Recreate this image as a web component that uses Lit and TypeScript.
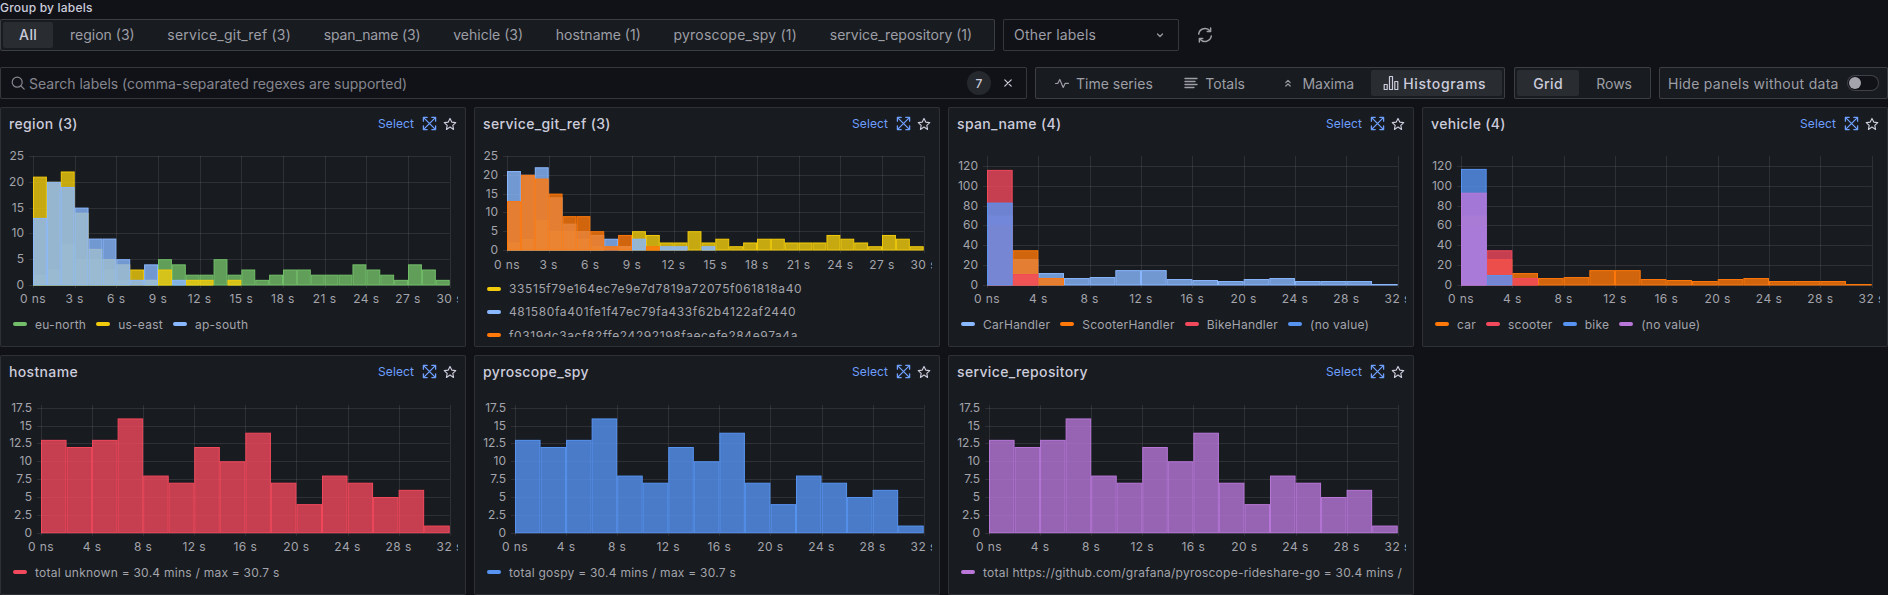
import { LitElement, html, css, svg } from "lit";
import { customElement } from "lit/decorators.js";

const GREEN = "#73BF69", YELLOW = "#F2CC0C", LBLUE = "#8AB8FF", ORANGE = "#FF780A", RED = "#F2495C", BLUE = "#5794F2", PURPLE = "#B877D9";
const A = [2,3,8,5,5,3,1,0,1,5,4,2,2,5,2,3,1,2,3,3,2,2,2,4,3,2,1,4,3,1];
const B = [21,20,22,14,7,5,4,3,1,3,0,1,1,0,1];
const C = [13,20,19,15,9,9,5,1,4,0,1];
const CAR = [70,26,12,7,8,15,15,6,5,4,6,7,4,4,4,1];
const TOTAL = [13,12,13,16,8,7,12,10,14,7,4,8,7,5,6,1];

interface Series { name: string; color: string; data: number[] }
interface Panel {
  title: string; series: Series[]; x0: number; yTop: number; base: number; svgH: number; xLabelOff: number;
  yMax: number; yStep: number; xMax: number; xStep: number; binW: number; list?: boolean;
}

const wide = { x0: 30, yMax: 130, yStep: 20, xMax: 32, xStep: 4, binW: 2, yTop: 9, base: 138, svgH: 165, xLabelOff: 18 };
const low = { x0: 32, yMax: 17.88, yStep: 2.5, xMax: 32, xStep: 4, binW: 2, yTop: 10, base: 137.7, svgH: 165, xLabelOff: 18 };
const thirty = { x0: 24, yMax: 25, yStep: 5, xMax: 30, xStep: 3, binW: 1, yTop: 9, base: 138, svgH: 165, xLabelOff: 18 };

const PANELS: Panel[] = [
  { title: "region (3)", ...thirty, series: [
    { name: "eu-north", color: GREEN, data: A }, { name: "us-east", color: YELLOW, data: B }, { name: "ap-south", color: LBLUE, data: C } ] },
  { title: "service_git_ref (3)", ...thirty, base: 103, svgH: 130, xLabelOff: 19, list: true, series: [
    { name: "33515f79e164ec7e9e7d7819a72075f061818a40", color: YELLOW, data: A },
    { name: "481580fa401fe1f47ec79fa433f62b4122af2440", color: LBLUE, data: B },
    { name: "f0319dc3acf82ffe24292198faecefe284e97a4a", color: ORANGE, data: C } ] },
  { title: "span_name (4)", ...wide, series: [
    { name: "CarHandler", color: LBLUE, data: CAR }, { name: "ScooterHandler", color: ORANGE, data: [60,35,7] },
    { name: "BikeHandler", color: RED, data: [116,11] }, { name: "(no value)", color: BLUE, data: [83] } ] },
  { title: "vehicle (4)", ...wide, series: [
    { name: "car", color: ORANGE, data: CAR }, { name: "scooter", color: RED, data: [60,35,7] },
    { name: "bike", color: BLUE, data: [117,10] }, { name: "(no value)", color: PURPLE, data: [93] } ] },
  { title: "hostname", ...low, series: [{ name: "total unknown = 30.4 mins / max = 30.7 s", color: RED, data: TOTAL }] },
  { title: "pyroscope_spy", ...low, series: [{ name: "total gospy = 30.4 mins / max = 30.7 s", color: BLUE, data: TOTAL }] },
  { title: "service_repository", ...low, series: [{ name: "total https://github.com/grafana/pyroscope-rideshare-go = 30.4 mins / max = 30.7 s", color: PURPLE, data: TOTAL }] },
];

const X1 = 440.7;

function chart(p: Panel) {
  const sx = (v: number) => p.x0 + (v / p.xMax) * (X1 - p.x0);
  const sy = (v: number) => p.base - (v / p.yMax) * (p.base - p.yTop);
  const yTicks: number[] = [];
  for (let v = 0; v <= p.yMax + 1e-6; v += p.yStep) yTicks.push(v);
  const xTicks: number[] = [];
  for (let v = 0; v <= p.xMax; v += p.xStep) xTicks.push(v);
  const xLabelY = p.base + p.xLabelOff;
  return html`<svg class="chart" width="449" height=${p.svgH} viewBox="0 0 449 ${p.svgH}">
    ${yTicks.map((v) => svg`
      <line class="grid" x1=${p.x0 - 4} x2=${X1} y1=${Math.round(sy(v)) + 0.5} y2=${Math.round(sy(v)) + 0.5}></line>
      <text class="tick" text-anchor="end" x=${p.x0 - 9} y=${sy(v) + 4}>${v}</text>`)}
    ${xTicks.map((v) => svg`
      <line class="grid" x1=${Math.round(sx(v)) + 0.5} x2=${Math.round(sx(v)) + 0.5} y1=${p.yTop} y2=${p.base + 3}></line>
      <text class="tick xt" text-anchor="middle" x=${sx(v)} y=${xLabelY}>${v === 0 ? "0 ns" : `${v} s`}</text>`)}
    ${p.series.map((s) => s.data.map((d, i) => {
      if (!d) return null;
      const x = sx(i * p.binW), w = sx((i + 1) * p.binW) - x, y = sy(d);
      return svg`<rect x=${x + 0.5} y=${y + 0.5} width=${Math.max(w - 1, 0)} height=${Math.max(p.base - y - 0.5, 0)}
        fill=${s.color} fill-opacity="0.8" stroke=${s.color} stroke-width="1"></rect>`;
    }))}
  </svg>`;
}

const ic = (w: number, body: unknown, cls = "") => html`<svg class="ic ${cls}" width=${w} height=${w} viewBox="0 0 16 16" fill="none" stroke="currentColor" stroke-width="1.2" stroke-linecap="round" stroke-linejoin="round">${body}</svg>`;
const searchIc = ic(16, svg`<circle cx="7.2" cy="7.2" r="5"></circle><path d="M11 11l3.2 3.2"></path>`);
const chevron = ic(16, svg`<path d="M5.5 7l2.5 2.5L10.5 7"></path>`);
const syncIc = ic(18, svg`<path d="M2.4 7.2A5.7 5.7 0 0 1 12.5 4.4" stroke-width="1.3"></path><path d="M13 1.8v3h-3" stroke-width="1.3"></path><path d="M13.6 8.8A5.7 5.7 0 0 1 3.5 11.6" stroke-width="1.3"></path><path d="M3 14.2v-3h3" stroke-width="1.3"></path>`);
const closeIc = ic(16, svg`<path d="M4.8 4.8l6.4 6.4M11.2 4.8l-6.4 6.4"></path>`);
const pulse = ic(16, svg`<path d="M1.5 8.5h2.2L5.8 4.5l3.4 8 2-4.2h3.3"></path>`);
const totals = ic(16, svg`<path d="M2 3.5h12M2 6.5h10M2 9.5h12M2 12.5h9" stroke-width="1.4"></path>`);
const maxima = ic(16, svg`<path d="M5.8 7.6L8 5.4l2.2 2.2M5.8 11L8 8.8l2.2 2.2"></path>`);
const hist = ic(16, svg`<rect x="1.2" y="9.5" width="3" height="5"></rect><rect x="6.5" y="1.5" width="3" height="13"></rect><rect x="11.8" y="6.5" width="3" height="8"></rect>`);
const expand = ic(15, svg`<path d="M2 2l12 12M14 2L2 14" stroke-width="1.4"></path><path d="M1.5 5.5V1.5H5.5M10.5 1.5h4V5.5M14.5 10.5v4H10.5M5.5 14.5H1.5V10.5" stroke-width="1.4"></path>`, "blue");
const star = ic(14, svg`<path d="M8 1.6l2 4.2 4.6.6-3.4 3.2.9 4.6L8 11.4l-4.1 2.8.9-4.6L1.4 6.4 6 5.8z" stroke-width="1.3"></path>`, "star");

@customElement("app-root")
export class AppRoot extends LitElement {
  static styles = css`
    :host { display: block; width: 1888px; height: 595px; overflow: hidden; background: #111217; color: #ccccdc;
      font-family: Inter, "Noto Sans", sans-serif; font-size: 14px; }
    * { box-sizing: border-box; }
    .ic { flex: none; display: block; }
    .group-label { height: 19px; line-height: 16px; font-size: 12px; font-weight: 500; letter-spacing: .2px; }
    .row { display: flex; height: 32px; }
    .row1 { gap: 8px; align-items: center; }
    .row1 .item, .row1 .select { padding-bottom: 1px; }
    .row2 { gap: 8px; margin-top: 16px; }
    .seg { display: flex; align-items: center; gap: 1px; height: 32px; padding: 0 2px; background: #181b1f;
      border: 1px solid rgba(204,204,220,.2); border-radius: 2px; color: #9d9ea6; white-space: nowrap; }
    .view { margin-right: 1px; }
    .tabs { width: 995px; gap: .7px; }
    .item { display: flex; align-items: center; gap: 6px; height: 26px; padding: 0 16px; border-radius: 2px; }
    .item.on { background: #292c31; color: #ccccdc; font-weight: 500; letter-spacing: .45px; }
    .item.hist { padding-left: 12px; gap: 4px; letter-spacing: .65px; }
    .item.tot { padding: 0 18.5px 0 13.5px; }
    .item.loose { letter-spacing: .22px; }
    .item.tight { letter-spacing: -.12px; }
    .select { display: flex; align-items: center; justify-content: space-between; width: 176px; height: 32px; padding: 0 10px;
      background: #111217; border: 1px solid rgba(204,204,220,.2); border-radius: 2px; color: #9d9ea6; letter-spacing: .2px; }
    .refresh { color: #9d9ea6; margin-left: 9px; }
    .search { flex: 1; display: flex; align-items: center; gap: 3px; padding: 0 10px 0 9px; background: #111217;
      border: 1px solid rgba(204,204,220,.2); border-radius: 2px; color: #85868f; }
    .search .ph { flex: 1; }
    .badge { width: 24px; height: 24px; border-radius: 50%; background: #25282d; color: #ccccdc; font-size: 12px; font-weight: 500;
      display: flex; align-items: center; justify-content: center; }
    .search .x { color: #ccccdc; margin-left: 6px; }
    .hide { display: flex; align-items: center; gap: 8px; width: 229px; padding: 0 8px; background: #181b1f;
      border: 1px solid rgba(204,204,220,.2); border-radius: 2px; color: #9d9ea6; white-space: nowrap; letter-spacing: .28px; }
    .switch { width: 32px; height: 16px; border: 1px solid rgba(204,204,220,.25); border-radius: 8px; background: #111217; padding: 1px; margin-left: auto; }
    .switch i { display: block; width: 12px; height: 12px; border-radius: 50%; background: #a3a4ac; }
    .grid-wrap { display: grid; grid-template-columns: repeat(4, 466px); grid-auto-rows: 240px; gap: 8px; margin-top: 8px; }
    .panel { display: flex; flex-direction: column; min-width: 0; padding: 0 8px 9px; background: #181b1f;
      border: 1px solid rgba(204,204,220,.12); border-radius: 2px; overflow: hidden; }
    .head { display: flex; align-items: center; height: 39px; flex: none; padding-bottom: 8px; }
    .title { flex: 1; font-weight: 500; color: #ccccdc; font-size: 14px; letter-spacing: .35px; }
    .sel { color: #6e9fff; font-size: 12px; margin-right: 8px; letter-spacing: .1px; }
    .blue { color: #6e9fff; }
    .star { color: #ccccdc; margin-left: 6px; }
    .chart { display: block; flex: none; overflow: hidden; }
    .grid { stroke: rgba(204,204,220,.12); stroke-width: 1; }
    .tick { fill: #a3a4ac; font-size: 12px; font-family: Inter, "Noto Sans", sans-serif; }
    .xt { letter-spacing: .45px; }
    .legend { flex: 1; min-height: 0; overflow: hidden; display: flex; gap: 10px; align-items: center; padding: 0 0 1px 4px;
      font-size: 12px; color: #a3a4ac; white-space: nowrap; letter-spacing: .25px; }
    .legend.list { display: block; padding-bottom: 0; letter-spacing: .6px; }
    .legend.list .li { height: 23.3px; }
    .li { display: flex; align-items: center; gap: 8px; flex: none; }
    .mark { width: 14px; height: 4px; border-radius: 2px; flex: none; }
  `;

  render() {
    const tabs: [string, string][] = [["region (3)", ""], ["service_git_ref (3)", "loose"], ["span_name (3)", "tight"], ["vehicle (3)", ""], ["hostname (1)", ""], ["pyroscope_spy (1)", "loose"], ["service_repository (1)", ""]];
    return html`
      <div class="group-label">Group by labels</div>
      <div class="row row1">
        <div class="seg tabs">
          <div class="item on">All</div>
          ${tabs.map(([t, c]) => html`<div class="item ${c}">${t}</div>`)}
        </div>
        <div class="select"><span>Other labels</span>${chevron}</div>
        <div class="refresh">${syncIc}</div>
      </div>
      <div class="row row2">
        <div class="search">
          ${searchIc}<span class="ph">Search labels (comma-separated regexes are supported)</span>
          <span class="badge">7</span><span class="x">${closeIc}</span>
        </div>
        <div class="seg view">
          <div class="item">${pulse}Time series</div>
          <div class="item tot">${totals}Totals</div>
          <div class="item">${maxima}Maxima</div>
          <div class="item on hist">${hist}Histograms</div>
        </div>
        <div class="seg">
          <div class="item on">Grid</div>
          <div class="item">Rows</div>
        </div>
        <div class="hide"><span>Hide panels without data</span><span class="switch"><i></i></span></div>
      </div>
      <div class="grid-wrap">
        ${PANELS.map((p) => html`
          <section class="panel">
            <div class="head">
              <span class="title">${p.title}</span>
              <span class="sel">Select</span>${expand}${star}
            </div>
            ${chart(p)}
            <div class="legend ${p.list ? "list" : ""}">
              ${p.series.map((s) => html`<div class="li"><span class="mark" style="background:${s.color}"></span>${s.name}</div>`)}
            </div>
          </section>`)}
      </div>
    `;
  }
}
